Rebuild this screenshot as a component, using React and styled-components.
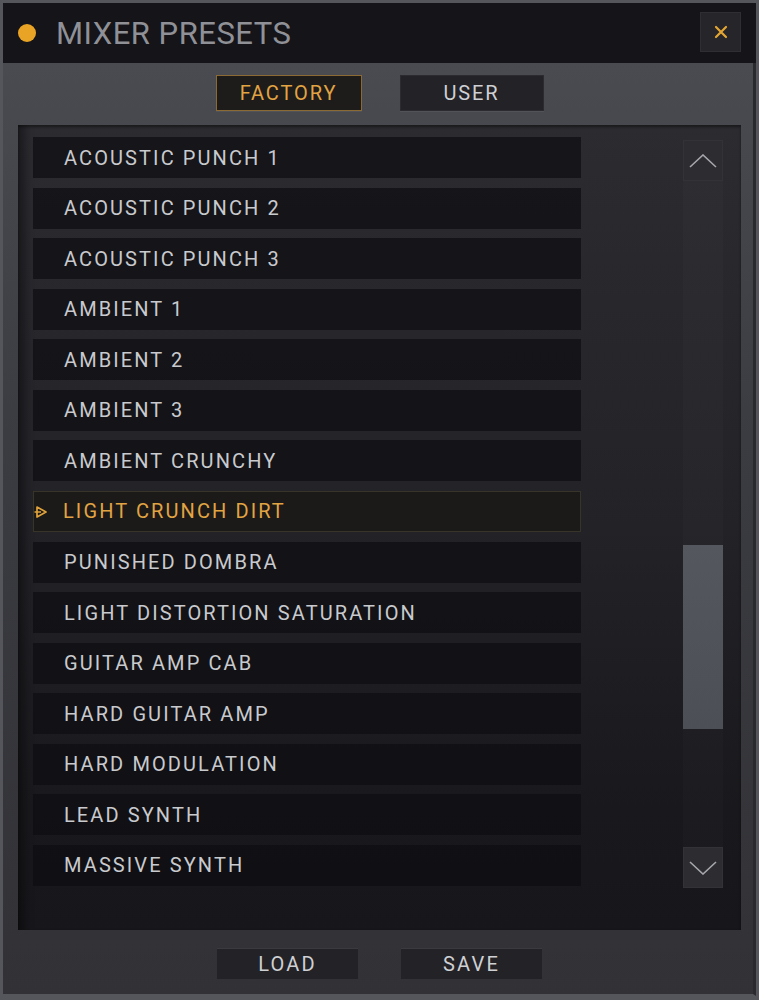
import styled, { createGlobalStyle } from "styled-components";

const presets = [
  "ACOUSTIC PUNCH 1",
  "ACOUSTIC PUNCH 2",
  "ACOUSTIC PUNCH 3",
  "AMBIENT 1",
  "AMBIENT 2",
  "AMBIENT 3",
  "AMBIENT CRUNCHY",
  "LIGHT CRUNCH DIRT",
  "PUNISHED DOMBRA",
  "LIGHT DISTORTION SATURATION",
  "GUITAR AMP CAB",
  "HARD GUITAR AMP",
  "HARD MODULATION",
  "LEAD SYNTH",
  "MASSIVE SYNTH",
];

const selected = "LIGHT CRUNCH DIRT";

const GlobalStyle = createGlobalStyle`
  * {
    box-sizing: border-box;
  }
  body {
    margin: 0;
    background: #1b1b1f;
    font-family: Roboto, "DejaVu Sans", sans-serif;
  }
`;

const App = () => {
  return (
    <>
      <GlobalStyle />
      <Window>
        <Header>
          <Dot />
          <Title>MIXER PRESETS</Title>
          <CloseButton aria-label="close">
            <svg width="16" height="16" viewBox="0 0 16 16">
              <path
                d="M3 3 L13 13 M13 3 L3 13"
                stroke="#e3a632"
                strokeWidth="2.2"
                strokeLinecap="round"
              />
            </svg>
          </CloseButton>
        </Header>
        <Body>
          <Tabs>
            <Tab active>FACTORY</Tab>
            <Tab>USER</Tab>
          </Tabs>
          <ListPanel>
            <List>
              {presets.map((name) => (
                <Row key={name} selected={name === selected}>
                  {name === selected && (
                    <Marker width="14" height="14" viewBox="0 0 14 14">
                      <path
                        d="M3 2 L12 7 L3 12 Z M0.5 7 H7"
                        fill="none"
                        stroke="#e0a23a"
                        strokeWidth="1.7"
                        strokeLinejoin="round"
                      />
                    </Marker>
                  )}
                  {name}
                </Row>
              ))}
            </List>
            <ScrollBar>
              <ScrollButton>
                <svg width="28" height="14" viewBox="0 0 28 14">
                  <path
                    d="M1 13 L14 1 L27 13"
                    fill="none"
                    stroke="#a6a7ad"
                    strokeWidth="1.6"
                  />
                </svg>
              </ScrollButton>
              <Track>
                <Thumb />
              </Track>
              <ScrollButton>
                <svg width="28" height="14" viewBox="0 0 28 14">
                  <path
                    d="M1 1 L14 13 L27 1"
                    fill="none"
                    stroke="#a6a7ad"
                    strokeWidth="1.6"
                  />
                </svg>
              </ScrollButton>
            </ScrollBar>
          </ListPanel>
          <Footer>
            <FooterButton>LOAD</FooterButton>
            <FooterButton>SAVE</FooterButton>
          </Footer>
        </Body>
      </Window>
    </>
  );
};

const Window = styled.div`
  width: 759px;
  height: 1000px;
  display: flex;
  flex-direction: column;
  border: 3px solid #55565c;
  border-bottom-width: 4px;
  background: #141419;
`;

const Header = styled.div`
  height: 60px;
  display: flex;
  align-items: center;
  padding: 0 15px 0 15px;
  background: #141419;
`;

const Dot = styled.div`
  width: 18px;
  height: 18px;
  border-radius: 50%;
  background: #eaa425;
  margin-right: 20px;
`;

const Title = styled.div`
  flex: 1;
  color: #8f9197;
  font-size: 31px;
  font-weight: 400;
  letter-spacing: 0.5px;
`;

const CloseButton = styled.div`
  width: 41px;
  height: 40px;
  display: flex;
  align-items: center;
  justify-content: center;
  background: #25252a;
  border: 1px solid #2e2e33;
  margin-top: -2px;
`;

const Body = styled.div`
  flex: 1;
  display: flex;
  flex-direction: column;
  padding: 12px 12px 0 15px;
  background: linear-gradient(180deg, #4a4b51 0%, #3b3c41 40%, #313136 100%);
  border-right: 3px solid #2a2a2e;
  border-bottom: 2px solid #55565c;
`;

const Tabs = styled.div`
  display: flex;
  justify-content: center;
  gap: 38px;
`;

const Tab = styled.div`
  width: ${(p) => (p.active ? "146px" : "144px")};
  height: 36px;
  display: flex;
  align-items: center;
  justify-content: center;
  font-size: 20px;
  letter-spacing: 1.9px;
  color: ${(p) => (p.active ? "#e2a443" : "#cfd0d4")};
  background: ${(p) => (p.active ? "#1d1c1b" : "#232327")};
  border: 1px solid ${(p) => (p.active ? "#8b6a34" : "#2c2c30")};
  box-shadow: 0 1px 0 rgba(255, 255, 255, 0.06);
`;

const ListPanel = styled.div`
  margin-top: 14px;
  height: 805px;
  display: flex;
  padding: 12px 18px 0 15px;
  background: linear-gradient(180deg, #2b2b30 0%, #222227 50%, #19191d 85%, #17171b 100%);
  box-shadow: inset 15px 0 8px -8px rgba(0, 0, 0, 0.35),
    inset 0 2px 3px rgba(0, 0, 0, 0.4);
`;

const List = styled.div`
  width: 548px;
  display: flex;
  flex-direction: column;
  gap: 9.57px;
`;

const Row = styled.div`
  position: relative;
  height: 41px;
  flex-shrink: 0;
  display: flex;
  align-items: center;
  padding-left: ${(p) => (p.selected ? "29px" : "30px")};
  font-size: 20px;
  letter-spacing: 2.1px;
  color: ${(p) => (p.selected ? "#e2a443" : "#c9cace")};
  background: ${(p) => (p.selected ? "#1b1a18" : "rgba(14, 14, 18, 0.72)")};
  border: 1px solid ${(p) => (p.selected ? "#39342a" : "transparent")};
`;

const Marker = styled.svg`
  position: absolute;
  left: 0;
  top: 13px;
`;

const ScrollBar = styled.div`
  width: 40px;
  margin-left: auto;
  margin-top: 3px;
  height: 748px;
  display: flex;
  flex-direction: column;
`;

const ScrollButton = styled.div`
  height: 41px;
  display: flex;
  align-items: center;
  justify-content: center;
  background: #2c2c31;
  border: 1px solid #323237;
`;

const Track = styled.div`
  flex: 1;
  background: rgba(255, 255, 255, 0.015);
  padding-top: 364px;
`;

const Thumb = styled.div`
  height: 184px;
  background: linear-gradient(180deg, #55575e 0%, #4d4f56 100%);
`;

const Footer = styled.div`
  flex: 1;
  display: flex;
  justify-content: center;
  align-items: center;
  gap: 43px;
  padding-top: 2px;
`;

const FooterButton = styled.div`
  width: 141px;
  height: 31px;
  display: flex;
  align-items: center;
  justify-content: center;
  font-size: 20px;
  letter-spacing: 2.2px;
  color: #cfd0d4;
  background: #232327;
  border-top: 1px solid #3a3a3f;
`;

export default App;
